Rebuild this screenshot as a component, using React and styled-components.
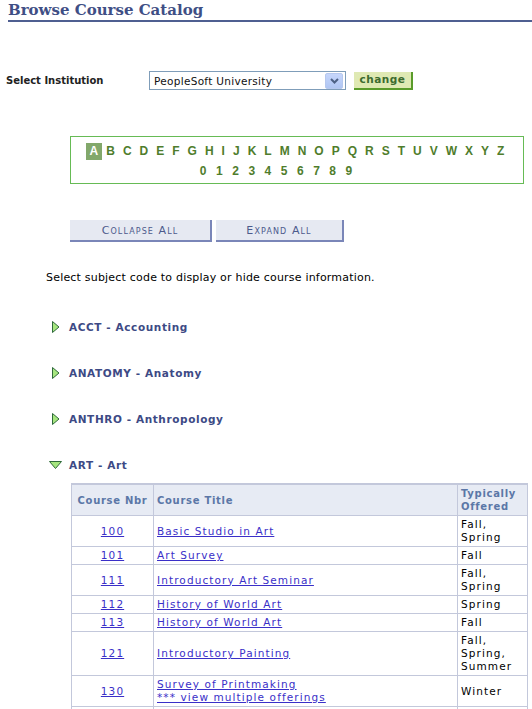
import React from "react";
import styled, { createGlobalStyle } from "styled-components";

const GlobalStyle = createGlobalStyle`
  html, body { margin: 0; padding: 0; background: #fff; }
  body { font-family: "DejaVu Sans", Verdana, sans-serif; font-size: 11px; color: #000; }
`;

const Page = styled.div`
  width: 532px;
  padding-top: 2px;
`;

const Header = styled.div`
  margin-left: 8px;
  border-bottom: 2px solid #4f5f91;
  height: 18px;
`;

const Title = styled.h1`
  margin: 0;
  font-family: "DejaVu Serif", "Liberation Serif", serif;
  font-weight: bold;
  font-size: 15px;
  line-height: 17px;
  letter-spacing: 0;
  color: #3f4f85;
`;

const InstRow = styled.div`
  display: flex;
  align-items: center;
  margin-top: 49px;
  padding-left: 6px;
  height: 19px;
`;

const Label = styled.span`
  width: 143px;
  font-weight: bold;
  font-size: 10px;
  color: #222;
  letter-spacing: 0;
`;

const SelectBox = styled.div`
  width: 191px;
  height: 17px;
  border: 1px solid #7f9db9;
  display: flex;
  align-items: center;
  justify-content: space-between;
  padding-left: 4px;
  box-sizing: content-box;
  font-size: 10.5px;
  letter-spacing: 0.3px;
  color: #111;
`;

const DropBtn = styled.span`
  width: 16px;
  height: 14px;
  margin-right: 2px;
  border-radius: 2px;
  background: linear-gradient(#c6d6fb, #b0c6f3);
  border: 1px solid #b6c8ee;
  display: flex;
  align-items: center;
  justify-content: center;
`;

const ChangeBtn = styled.button`
  margin-left: 8px;
  height: 18px;
  width: 59px;
  padding: 0 0 1px 0;
  background: #dfe9b3;
  border: none;
  border-right: 2px solid #5a9b2a;
  border-bottom: 2px solid #5a9b2a;
  font-family: "DejaVu Sans", sans-serif;
  font-weight: bold;
  font-size: 10.5px;
  letter-spacing: 0.5px;
  color: #3c6b2f;
`;

const AlphaBox = styled.div`
  margin: 46px 0 0 70px;
  width: 452px;
  height: 42px;
  border: 1px solid #66bb55;
  display: flex;
  flex-direction: column;
  padding-top: 4px;
  box-sizing: content-box;
`;

const AlphaRow = styled.div`
  display: flex;
  justify-content: center;
  gap: ${(p) => p.$gap || 0}px;
  padding-right: ${(p) => p.$shift || 0}px;
  height: 20px;
  align-items: center;
`;

const Letter = styled.a`
  font-family: "Liberation Sans", Arial, sans-serif;
  font-weight: bold;
  font-size: 12px;
  line-height: 17px;
  padding: 0 4px;
  color: ${(p) => (p.$active ? "#fff" : "#4f7d2c")};
  background: ${(p) => (p.$active ? "#82a86b" : "transparent")};
  text-decoration: none;
  text-align: center;
`;

const BtnRow = styled.div`
  display: flex;
  gap: 4px;
  margin: 36px 0 0 70px;
`;

const ActionBtn = styled.button`
  width: ${(p) => p.$w}px;
  height: 22px;
  padding: 0;
  background: #e6e9f2;
  border: none;
  border-right: 2px solid #7a86b8;
  border-bottom: 2px solid #7a86b8;
  font-family: "DejaVu Sans", sans-serif;
  font-size: 11px;
  font-variant: small-caps;
  letter-spacing: 1.1px;
  color: #4c5a8c;
`;

const Instruction = styled.p`
  margin: 29px 0 0 46px;
  font-size: 11px;
  line-height: 13px;
  letter-spacing: 0.2px;
`;

const SubjectList = styled.div`
  margin-top: 20px;
  display: flex;
  flex-direction: column;
`;

const Subject = styled.div`
  display: flex;
  align-items: center;
  height: 46px;
  padding-left: ${(p) => (p.$open ? 49 : 52)}px;
`;

const SubjectName = styled.a`
  margin-left: ${(p) => (p.$open ? 7 : 9)}px;
  font-weight: bold;
  font-size: 10.5px;
  letter-spacing: 0.6px;
  color: #3d4a85;
  text-decoration: none;
`;

const TableWrap = styled.div`
  margin: -5px 0 0 71px;
`;

const Table = styled.table`
  width: 456px;
  border-collapse: collapse;
  border-top: 2px solid #c3c8db;
  table-layout: fixed;
`;

const Th = styled.th`
  background: #e7ebf4;
  border: 1px solid #c3c8db;
  color: #5b77a7;
  font-size: 10px;
  font-weight: bold;
  letter-spacing: 0.7px;
  line-height: 13px;
  padding: 2px 3px;
  white-space: ${(p) => (p.$nowrap ? "nowrap" : "normal")};
  text-align: ${(p) => p.$align || "left"};
  vertical-align: middle;
`;

const Td = styled.td`
  border: 1px solid #c3c8db;
  padding: 2px 3px;
  line-height: 13px;
  font-size: 10.5px;
  letter-spacing: 1.1px;
  text-align: ${(p) => p.$align || "left"};
  vertical-align: middle;
`;

const Link = styled.a`
  color: #3a2fc8;
  text-decoration: underline;
`;

const RightTri = () => (
  <svg width="8" height="12" viewBox="0 0 8 12">
    <path d="M0.5 0.5 L7 6 L0.5 11.5 Z" fill="#a6e67f" stroke="#2f6a3a" strokeWidth="1" />
  </svg>
);

const DownTri = () => (
  <svg width="13" height="8" viewBox="0 0 13 8">
    <path d="M0.5 0.5 L12.5 0.5 L6.5 7.5 Z" fill="#a6e67f" stroke="#2f6a3a" strokeWidth="1" />
  </svg>
);

const letters = "ABCDEFGHIJKLMNOPQRSTUVWXYZ".split("");
const digits = "0123456789".split("");

const subjects = [
  "ACCT - Accounting",
  "ANATOMY - Anatomy",
  "ANTHRO - Anthropology",
];

const courses = [
  { nbr: "100", title: ["Basic Studio in Art"], off: ["Fall,", "Spring"] },
  { nbr: "101", title: ["Art Survey"], off: ["Fall"] },
  { nbr: "111", title: ["Introductory Art Seminar"], off: ["Fall,", "Spring"] },
  { nbr: "112", title: ["History of World Art"], off: ["Spring"] },
  { nbr: "113", title: ["History of World Art"], off: ["Fall"] },
  { nbr: "121", title: ["Introductory Painting"], off: ["Fall,", "Spring,", "Summer"] },
  { nbr: "130", title: ["Survey of Printmaking", "*** view multiple offerings"], off: ["Winter"] },
  { nbr: "", title: [""], off: [""] },
];

export default function App() {
  return (
    <Page>
      <GlobalStyle />
      <Header>
        <Title>Browse Course Catalog</Title>
      </Header>

      <InstRow>
        <Label>Select Institution</Label>
        <SelectBox>
          <span>PeopleSoft University</span>
          <DropBtn>
            <svg width="9" height="6" viewBox="0 0 9 6">
              <path d="M1 1 L4.5 4.5 L8 1" fill="none" stroke="#4d6185" strokeWidth="2" />
            </svg>
          </DropBtn>
        </SelectBox>
        <ChangeBtn>change</ChangeBtn>
      </InstRow>

      <AlphaBox>
        <AlphaRow>
          {letters.map((l) => (
            <Letter key={l} $active={l === "A"}>{l}</Letter>
          ))}
        </AlphaRow>
        <AlphaRow $shift={42} $gap={1.5}>
          {digits.map((d) => (
            <Letter key={d}>{d}</Letter>
          ))}
        </AlphaRow>
      </AlphaBox>

      <BtnRow>
        <ActionBtn $w={142}>Collapse All</ActionBtn>
        <ActionBtn $w={128}>Expand All</ActionBtn>
      </BtnRow>

      <Instruction>Select subject code to display or hide course information.</Instruction>

      <SubjectList>
        {subjects.map((s) => (
          <Subject key={s}>
            <RightTri />
            <SubjectName>{s}</SubjectName>
          </Subject>
        ))}
        <Subject $open>
          <DownTri />
          <SubjectName $open>ART - Art</SubjectName>
        </Subject>
      </SubjectList>

      <TableWrap>
        <Table>
          <colgroup>
            <col style={{ width: 82 }} />
            <col style={{ width: 304 }} />
            <col style={{ width: 70 }} />
          </colgroup>
          <thead>
            <tr>
              <Th $align="center" $nowrap>Course Nbr</Th>
              <Th>Course Title</Th>
              <Th>Typically Offered</Th>
            </tr>
          </thead>
          <tbody>
            {courses.map((c, i) => (
              <tr key={i}>
                <Td $align="center">{c.nbr && <Link>{c.nbr}</Link>}</Td>
                <Td>
                  {c.title.map((t, j) => (
                    <div key={j}>{t && <Link>{t}</Link>}</div>
                  ))}
                </Td>
                <Td>
                  {c.off.map((o, j) => (
                    <div key={j}>{o || "\u00a0"}</div>
                  ))}
                </Td>
              </tr>
            ))}
          </tbody>
        </Table>
      </TableWrap>
    </Page>
  );
}
